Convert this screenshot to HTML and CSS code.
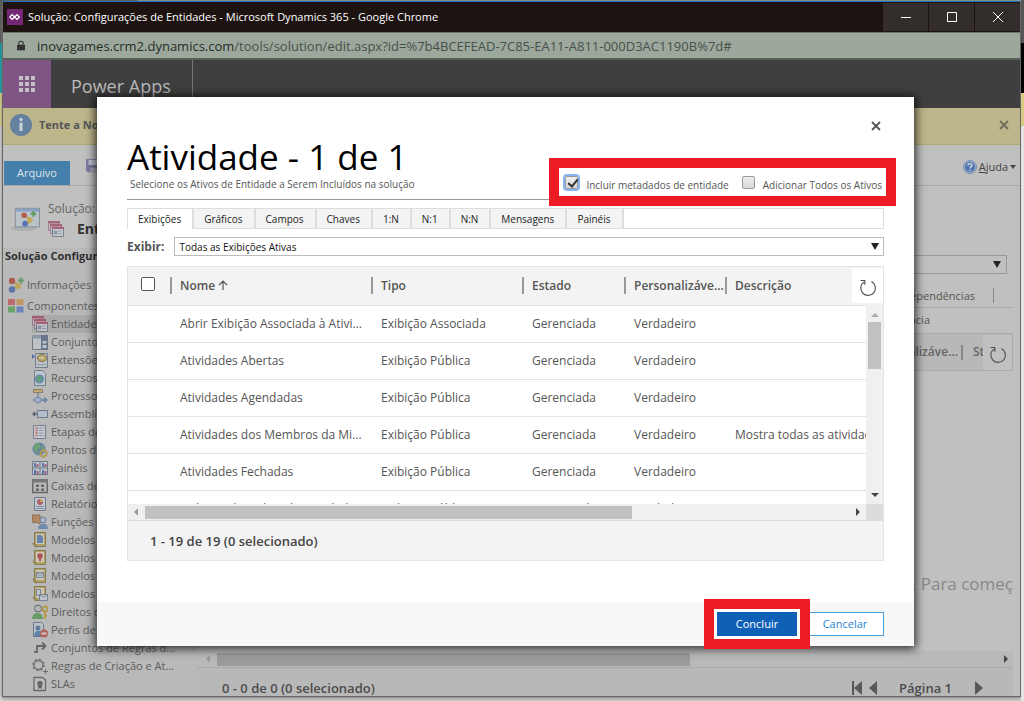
FILE: index.html
```html
<!DOCTYPE html>
<html lang="pt-BR">
<head>
<meta charset="utf-8">
<title>Solução: Configurações de Entidades</title>
<link rel="stylesheet" href="styles.css">
</head>
<body>
<div class="strip strip-left"></div>
<div class="window">
  <header class="titlebar">
    <svg class="app-icon" viewBox="0 0 16 16"><rect width="16" height="16" fill="#742774"/><path d="M5.2 5.6 7.6 8 5.2 10.4 2.8 8zM10 5.6 12.400 8 10 10.400 7.600 8z" fill="none" stroke="#fff" stroke-width="1.300"/></svg>
    <span class="window-title">Solução: Configurações de Entidades - Microsoft Dynamics 365 - Google Chrome</span>
    <button class="win-btn" aria-label="Minimizar"><svg viewBox="0 0 12 12"><path d="M1 6.500h10"/></svg></button>
    <button class="win-btn" aria-label="Maximizar"><svg viewBox="0 0 12 12"><path d="M1.500 1.500h9v9h-9z"/></svg></button>
    <button class="win-btn" aria-label="Fechar janela"><svg viewBox="0 0 12 12"><path d="M1 1l10 10M11 1 1 11"/></svg></button>
  </header>
  <div class="urlbar">
    <svg class="lock" viewBox="0 0 10 12"><path d="M0 5h10v7H0z" fill="#333"/><path d="M2.300 5V3a2.700 2.300 0 0 1 5.400 0v2" fill="none" stroke="#333" stroke-width="1.400"/></svg>
    <span class="url"><b>inovagames.crm2.dynamics.com</b>/tools/solution/edit.aspx?id=%7b4BCEFEAD-7C85-EA11-A811-000D3AC1190B%7d#</span>
  </div>
  <div class="appbar">
    <button class="waffle" aria-label="Aplicativos"><svg viewBox="0 0 16 16" fill="#c4bfc5"><path d="M0 0h4v4H0zM6 0h4v4H6zM12 0h4v4h-4zM0 6h4v4H0zM6 6h4v4H6zM12 6h4v4h-4zM0 12h4v4H0zM6 12h4v4H6zM12 12h4v4h-4z"/></svg></button>
    <span class="brand">Power Apps</span>
  </div>
  <div class="notice">
    <svg class="info" viewBox="0 0 22 22"><circle cx="11" cy="11" r="11" fill="#64819f"/><circle cx="11" cy="5.500" r="1.700" fill="#ccd3d8"/><path d="M9.500 8.500h3v8.500h-3z" fill="#ccd3d8"/></svg>
    <b>Tente a Nova</b>
    <button class="plain notice-close" aria-label="Fechar aviso"><svg viewBox="0 0 10 10"><path d="M1 1l8 8M9 1 1 9" stroke="#6d6b5b" stroke-width="1.800"/></svg></button>
  </div>
  <div class="ribbon">
    <button class="file-tab">Arquivo</button>
    <svg class="disk" viewBox="0 0 16 16"><path d="M0 0h16v15H2L0 13z" fill="#6a6a9c"/><path d="M3 1h10v6H3z" fill="#c4c9db"/><path d="M5 10h8v5H5z" fill="#a3a5ba"/></svg>
    <a class="help" href="#"><svg viewBox="0 0 14 14"><circle cx="7" cy="7" r="6.500" fill="#91a8cb" stroke="#6c87ad"/><circle cx="7" cy="7" r="5" fill="#3f68ad"/><path d="M5 5.500C5 3 9 3 9 5.500 9 7 7 6.800 7 8.500M7 9.700V11" fill="none" stroke="#dde4ef" stroke-width="1.300"/></svg><span><u>A</u>juda</span><i class="tri-down tiny"></i></a>
  </div>
  <div class="solution">
    <svg class="solution-icon" viewBox="0 0 32 28"><ellipse cx="14" cy="24" rx="14" ry="3" fill="#a9adb2"/><path d="M4.500 2.500h26v20h-26z" fill="#bcc3cb" stroke="#75808e"/><path d="M5 3h25v3H5z" fill="#7f9fc6"/><path d="M13 10l9 5-7 6" fill="none" stroke="#b59a4a" stroke-width="2"/><circle cx="14" cy="10" r="3" fill="#b24a3a"/><circle cx="15" cy="19" r="3" fill="#4566b5"/><circle cx="20" cy="15" r="3" fill="#c5a448"/><path d="M21 8.500h6M24 5.500v6" stroke="#4c9a52" stroke-width="2.200"/></svg>
    <div class="solution-text"><span>Solução: Configurações</span><strong><svg class="icon" viewBox="0 0 16 16"><use href="#i-ent"/></svg>Entidades</strong></div>
  </div>
  <div class="body">
    <nav class="sidebar">
      <h2>Solução Configurações</h2>
      <ul class="roots">
        <li><svg class="icon" viewBox="0 0 16 16"><path d="M4 4l7 4-6 4" fill="none" stroke="#a99350" stroke-width="2"/><circle cx="4" cy="4" r="3.200" fill="#a94738"/><circle cx="4" cy="12.500" r="3.200" fill="#4364a8"/><circle cx="10" cy="9" r="3" fill="#c2a249"/><path d="M10 3.500h6M13 .5v6" stroke="#4d9754" stroke-width="2"/></svg>Informações</li>
        <li><svg class="icon" viewBox="0 0 16 16"><path d="M0 1h7v6H0z" fill="#bd5a58"/><path d="M8.500 1h7v6h-7z" fill="#c0924d"/><path d="M0 8.500h7v6H0z" fill="#57a052"/><path d="M8.500 8.500h7v6h-7z" fill="#5875b8"/></svg>Componentes</li>
      </ul>
      <ul class="leaves">
        <li class="selected"><svg class="icon" viewBox="0 0 16 16"><g id="i-ent"><path d="M.5.5h11v9H.5z" fill="#c3bfc4" stroke="#95707f"/><path d="M0 0h12v2.500H0z" fill="#9f4c66"/><path d="M2.500 3.500h11v9h-11z" fill="#c3bfc4" stroke="#95707f"/><path d="M2 3h12v2.500H2z" fill="#9f4c66"/><path d="M4.500 6.500h11v9h-11z" fill="#c9ced5" stroke="#67727f"/><path d="M4 6h12v2H4z" fill="#9f4c66"/><path d="M6 10h3v3H6zM10 10h4M10 12.500h4" fill="#8d99aa" stroke="#77869a" stroke-width=".8"/></g></svg>Entidades</li>
        <li><svg class="icon" viewBox="0 0 16 16"><path d="M.5 1.500h15v14H.5z" fill="#c0c5ca" stroke="#596878"/><path d="M0 1h16v3.500H0z" fill="#8191a3"/><path d="M9 1h7v15H9z" fill="#53667c"/><path d="M10.500 7h4v2.500h-4zM10.500 11h4v3h-4z" fill="#bac5d0"/></svg>Conjuntos</li>
        <li><svg class="icon" viewBox="0 0 16 16"><path d="M3.500 1.500h12v14h-12z" fill="#bfc4cb" stroke="#617080"/><path d="M0 2l3 2.500L0 7z" fill="#3c5eaa"/><ellipse cx="10" cy="6" rx="4.500" ry="3.500" fill="#b4984f" stroke="#81703f"/><path d="M7 6h6M10 4v4" stroke="#e0d6b3"/><path d="M5 12.500h9" stroke="#8796a8"/></svg>Extensões</li>
        <li><svg class="icon" viewBox="0 0 16 16"><path d="M2.500.5h8l3 3v12h-11z" fill="#bfc8d1" stroke="#607080"/><circle cx="7.500" cy="9" r="4.500" fill="#4f7ea5"/><path d="M5 6l5 1-1 3-2 3-2-3z" fill="#4d9b65"/></svg>Recursos</li>
        <li><svg class="icon" viewBox="0 0 16 16"><path d="M1.500 1.500h9v3h-9z" fill="#c6a65c" stroke="#817353"/><path d="M6 5v5M8 12h7M12 9.500l3 2.500-3 2.500" fill="none" stroke="#516f9b" stroke-width="1.300"/><path d="M6 9l5 3-5 3-5-3z" fill="#9eb2ce" stroke="#516f9b"/></svg>Processos</li>
        <li><svg class="icon" viewBox="0 0 16 16"><path d="M5.500 4.500h10v7h-10z" fill="#b4bfcd" stroke="#596b82"/><path d="M5 8H1M3 6 1 8l2 2" fill="none" stroke="#444f5d" stroke-width="1.300"/></svg>Assemblies</li>
        <li><svg class="icon" viewBox="0 0 16 16"><path d="M1.500 1.500h12v13h-12z" fill="#cacdd1" stroke="#627181"/><path d="M3.500 4h2M3.500 6.500h2M3.500 9h2M3.500 11.500h2" stroke="#b34847" stroke-width="1.500"/><path d="M6.500 4h5M6.500 6.500h5M6.500 9h5M6.500 11.500h5" stroke="#8094a8"/></svg>Etapas de</li>
        <li><svg class="icon" viewBox="0 0 16 16"><circle cx="7" cy="7" r="6.500" fill="#50799f"/><path d="M2 3l5-2 2 4-4 3 1 4-4-3zM10 3l3 4-3 1z" fill="#5d9c65"/><circle cx="11.500" cy="11.500" r="3" fill="none" stroke="#ad9345" stroke-width="2"/><path d="M11.500 7v2M11.500 14v2M7 11.500h2M14 11.500h2" stroke="#ad9345" stroke-width="1.500"/></svg>Pontos de</li>
        <li><svg class="icon" viewBox="0 0 16 16"><path d="M.5 1.500h15v13H.5z" fill="#c2c7ce" stroke="#5b6a7d"/><path d="M8 1v14M0 8h16" stroke="#5b6a7d"/><path d="M3 3v4M3 10v4M11 3v4M11 10v4" stroke="#4565a9" stroke-width="2"/><path d="M5.500 4v3M5.500 11v3M13.500 4v3M13.500 11v3" stroke="#a84b65" stroke-width="2"/></svg>Painéis</li>
        <li><svg class="icon" viewBox="0 0 16 16"><path d="M.8 2h14.400v12.500H.8z" fill="none" stroke="#555" stroke-width="1.500"/><path d="M0 1h16v3.500H0z" fill="#666"/><path d="M4 6.500h3v2.500H4zM9 6.500h3v2.500H9zM4 10.500h3V13H4zM9 10.500h3V13H9z" fill="#555"/></svg>Caixas de</li>
        <li><svg class="icon" viewBox="0 0 16 16"><path d="M2.500 1.500h11v13h-11z" fill="#c5cad2" stroke="#5d6a83"/><circle cx="8" cy="6" r="3" fill="#a84c56"/><path d="M8 6V3a3 3 0 0 1 3 3z" fill="#cba650"/><path d="M4 10.500h8M4 12.500h8" stroke="#71809d"/></svg>Relatórios</li>
        <li><svg class="icon" viewBox="0 0 16 16"><path d="M0 1h8v3l2 3-3 3-2-2-4 1z" fill="#b27c51" stroke="#86593c"/><circle cx="11" cy="6" r="3" fill="#a8b7c9" stroke="#536d91"/><path d="M6 15c0-7 10-7 10 0z" fill="#5c7fac"/></svg>Funções de</li>
        <li><svg class="icon" viewBox="0 0 16 16"><g id="i-tpl"><path d="M2.500.5h11v14h-11z" fill="#b39d55" stroke="#776b3d"/><path d="M1 11l4 4" stroke="#8c7b43" stroke-width="2"/><path d="M4 2h8v10H4z" fill="#cfcab5"/></g><path d="M5 3h4l2 2v6H5z" fill="#5576aa"/></svg>Modelos de</li>
        <li><svg class="icon" viewBox="0 0 16 16"><use href="#i-tpl"/><circle cx="8" cy="6" r="2.700" fill="#ac3c3c"/><path d="M7 7h2v4H7z" fill="#ac3c3c"/></svg>Modelos de</li>
        <li><svg class="icon" viewBox="0 0 16 16"><use href="#i-tpl"/><path d="M4.500 4.500h7v5h-7z" fill="#b9c1cb" stroke="#707e90"/><path d="M4.500 4.500 8 7.500l3.500-3" fill="none" stroke="#707e90"/></svg>Modelos de</li>
        <li><svg class="icon" viewBox="0 0 16 16"><use href="#i-tpl"/><path d="M4.500 3.500h4v6h-4zM7.500 8.500h8v6h-8z" fill="#c5cad1" stroke="#65758a"/><path d="M7.500 8.500l4 3 4-3" fill="none" stroke="#65758a"/></svg>Modelos de</li>
        <li><svg class="icon" viewBox="0 0 16 16"><path d="M0 15c0-8 11-8 11 0z" fill="#519653"/><circle cx="6" cy="4.500" r="3.500" fill="#b1b5b7" stroke="#4c5258"/><circle cx="13" cy="5" r="2.500" fill="none" stroke="#b39337" stroke-width="2"/><path d="M13 7v8M13 12h2" stroke="#b39337" stroke-width="2"/></svg>Direitos de</li>
        <li><svg class="icon" viewBox="0 0 16 16"><path d="M1.500.5h8l2 2v12h-10z" fill="#bdc4cb" stroke="#5c6b7b"/><circle cx="6" cy="6" r="2.500" fill="#4b6c94"/><path d="M2 14c0-7 8-7 8 0z" fill="#4b78a8"/><circle cx="12" cy="11.500" r="4" fill="#ae4f42"/><path d="M9.500 11.500h5" stroke="#ddd" stroke-width="1.800"/></svg>Perfis de Seg</li>
        <li><svg class="icon" viewBox="0 0 16 16"><path d="M2 12h3V6h8M10 2.500 13.500 6 10 9.500" fill="none" stroke="#555" stroke-width="1.800"/></svg>Conjuntos de Regras d...</li>
        <li><svg class="icon" viewBox="0 0 16 16"><circle cx="6.500" cy="7" r="4.500" fill="none" stroke="#5c5c5c" stroke-width="1.300"/><circle cx="6.500" cy="7" r="5.500" fill="none" stroke="#5c5c5c" stroke-width="1.500" stroke-dasharray="2 2.300"/><path d="M11 13.500h5M13.500 11v5" stroke="#5c5c5c"/></svg>Regras de Criação e At...</li>
        <li><svg class="icon" viewBox="0 0 16 16"><path d="M2 1.500h8.500L13.500 4v10.500H2z" fill="#c0c0c0" stroke="#555" stroke-width="1.300"/><circle cx="8" cy="7.500" r="2.800" fill="#555"/><path d="M6 9h4v4l-2-1-2 1z" fill="#555"/></svg>SLAs</li>
        <li><svg class="icon" viewBox="0 0 16 16"><path d="M0 3h14v10H0z" fill="#3e74ac"/></svg></li>
      </ul>
    </nav>
    <main class="main">
      <div class="main-select"><i class="tri-down"></i></div>
      <div class="main-actions"><span>Dependências</span><i></i></div>
      <div class="main-sub">Dependência</div>
      <div class="main-head"><b>Personalizáve...</b><i></i><b>St</b><button class="plain refresh" aria-label="Atualizar lista"><svg viewBox="0 0 18 18"><use href="#i-ref"/></svg></button></div>
      <div class="main-empty">. Para começ</div>
      <div class="hscroll main-hscroll"><i class="tri-left"></i><i class="thumb"></i><i class="tri-right"></i></div>
      <div class="main-foot"><b>0 - 0 de 0 (0 selecionado)</b>
        <svg class="pager" viewBox="0 0 28 14" fill="#595959"><path d="M1 0h2v14H1zM11 0v14L3 7zM26 0v14l-8-7z"/></svg><b>Página 1</b><svg class="next" viewBox="0 0 10 14" fill="#595959"><path d="M1 0v14l8-7z"/></svg></div>
    </main>
  </div>
</div>
<div class="strip strip-right"></div>

<section class="dialog" role="dialog" aria-labelledby="dlg-title">
  <button class="plain dialog-close" aria-label="Fechar"><svg viewBox="0 0 10 10"><path d="M1 1l8 8M9 1 1 9" stroke="#555" stroke-width="1.800"/></svg></button>
  <div class="dialog-body">
    <div class="dialog-head">
      <div><h1 id="dlg-title">Atividade - 1 de 1</h1><p>Selecione os Ativos de Entidade a Serem Incluídos na solução</p></div>
      <div class="checks">
        <label><input type="checkbox" class="focused" checked>Incluir metadados de entidade</label>
        <label><input type="checkbox">Adicionar Todos os Ativos</label>
      </div>
    </div>
    <div class="tabs" role="tablist">
      <button role="tab" aria-selected="true">Exibições</button><button role="tab">Gráficos</button><button role="tab">Campos</button><button role="tab">Chaves</button><button role="tab">1:N</button><button role="tab">N:1</button><button role="tab">N:N</button><button role="tab">Mensagens</button><button role="tab">Painéis</button>
    </div>
    <div class="view-row">
      <label for="view">Exibir:</label>
      <div class="select-wrap"><select id="view"><option>Todas as Exibições Ativas</option></select><i class="tri-down"></i></div>
    </div>
    <div class="grid">
      <div class="grid-view">
        <table>
          <colgroup><col class="c-check"><col class="c-name"><col class="c-type"><col class="c-state"><col class="c-custom"><col></colgroup>
          <thead><tr><th><input type="checkbox" aria-label="Selecionar tudo"></th><th>Nome <svg class="sort" viewBox="0 0 10 10"><path d="M5 10V1M1 5l4-4 4 4" fill="none" stroke="#555" stroke-width="1.200"/></svg></th><th>Tipo</th><th>Estado</th><th>Personalizáve...</th><th>Descrição</th></tr></thead>
          <tbody>
            <tr><td></td><td>Abrir Exibição Associada à Ativi...</td><td>Exibição Associada</td><td>Gerenciada</td><td>Verdadeiro</td><td></td></tr>
            <tr><td></td><td>Atividades Abertas</td><td>Exibição Pública</td><td>Gerenciada</td><td>Verdadeiro</td><td></td></tr>
            <tr><td></td><td>Atividades Agendadas</td><td>Exibição Pública</td><td>Gerenciada</td><td>Verdadeiro</td><td></td></tr>
            <tr><td></td><td>Atividades dos Membros da Mi...</td><td>Exibição Pública</td><td>Gerenciada</td><td>Verdadeiro</td><td>Mostra todas as atividades</td></tr>
            <tr><td></td><td>Atividades Fechadas</td><td>Exibição Pública</td><td>Gerenciada</td><td>Verdadeiro</td><td></td></tr>
            <tr><td></td><td>Exibição de Linhas de Atividade</td><td>Exibição Pública</td><td>Gerenciada</td><td>Verdadeiro</td><td></td></tr>
          </tbody>
        </table>
        <div class="vscroll"><i class="tri-up"></i><i class="thumb"></i><i class="tri-down small"></i></div>
        <button class="plain refresh" aria-label="Atualizar"><svg viewBox="0 0 18 18"><g id="i-ref"><path d="M5.200 2.900A7.300 7.300 0 1 0 12.500 2.600" fill="none" stroke="#555" stroke-width="1.200"/><path d="M1.500 1.500h4.300v4.300" fill="none" stroke="#555" stroke-width="1.200"/></g></svg></button>
      </div>
      <div class="hscroll"><i class="tri-left"></i><i class="thumb"></i><i class="tri-right"></i><i class="corner"></i></div>
      <div class="grid-foot">1 - 19 de 19 (0 selecionado)</div>
    </div>
  </div>
  <footer class="dialog-foot"><button class="primary">Concluir</button><button class="secondary">Cancelar</button></footer>
</section>
</body>
</html>
```
FILE: styles.css
```css
* { box-sizing: border-box; }
body {
  margin: 0;
  position: relative;
  height: 100vh;
  overflow: hidden;
  display: flex;
  font: 11px/16px "Open Sans", "Noto Sans", sans-serif;
  color: #555;
  background: linear-gradient(90deg, #555 137px, #86958b 137px) top / 100% 2px no-repeat, #d2d2d2;
}
button, input, select { font: inherit; margin: 0; }
button { border: 0; padding: 0; border-radius: 0; }
i { flex: none; }
svg { display: block; flex: none; }
ul { list-style: none; margin: 0; padding: 0; }
.plain { background: none; }

.strip-left {
  width: 2px;
  background: linear-gradient(#555 43px, #00a1ae 43px 93px, #e5d98b 93px 126px, #d9d9d9 126px);
}
.strip-right {
  width: 3px;
  background: linear-gradient(#555 43px, #000 43px 93px, #d8cc85 93px 126px, #e4e4e4 126px);
}

.window {
  flex: 1;
  min-width: 0;
  margin: 1px 0 4px;
  display: flex;
  flex-direction: column;
  border: 1px solid #666;
  border-top-color: #1f75c4;
  background: #c0c0c0;
  box-shadow: 0 1px 4px #777;
  overflow: hidden;
}
.titlebar { display: flex; align-items: center; height: 30px; flex: none; background: #1d1411; color: #fff; font-size: 11px; }
.app-icon { width: 16px; height: 16px; margin: 0 5px 0 4px; }
.window-title { flex: 1; white-space: nowrap; }
.win-btn { width: 45px; height: 28px; margin-left: 1px; background: #332e2b; display: grid; place-items: center; }
.win-btn svg { width: 12px; height: 12px; fill: none; stroke: #fff; }
.urlbar { display: flex; align-items: center; gap: 12px; height: 28px; flex: none; padding-left: 14px; background: #9da89d; border-top: 1px solid #6d786d; border-bottom: 2px solid #566059; font-size: 13px; color: #47504a; }
.urlbar b { font-weight: 400; color: #272c29; }
.lock { width: 8px; height: 11px; }
.url { white-space: nowrap; }
.appbar { display: flex; height: 48px; flex: none; background: #3f3f3f; }
.waffle { width: 48px; background: #7f5583; display: grid; place-items: center; }
.waffle svg { width: 16px; height: 16px; }
.brand { display: flex; align-items: center; padding: 4px 21px 0 20px; border-right: 1px solid #777; font-size: 18px; color: #bbb; }
.notice { display: flex; align-items: center; gap: 7px; height: 37px; flex: none; padding: 0 11px 2px 7px; background: #bdb68b; border-bottom: 1px solid #b0a872; }
.info { width: 22px; height: 22px; }
.notice-close { margin-left: auto; }
.notice-close svg, .dialog-close svg { width: 10px; height: 10px; }
.ribbon { display: flex; align-items: flex-end; height: 41px; flex: none; padding: 0 4px 0 1px; border-bottom: 1px solid #a8a8a8; }
.file-tab { width: 66px; height: 24px; background: #4480ab; color: #dfe5ea; }
.disk { width: 14px; height: 14px; margin: 0 0 12px 16px; opacity: .8; }
.help { display: flex; align-items: center; gap: 2px; margin: 0 0 10px auto; color: #444; text-decoration: none; }
.help svg { width: 14px; height: 14px; opacity: .85; }
.solution { display: flex; align-items: center; gap: 7px; height: 62px; flex: none; padding: 4px 0 0 8px; }
.solution-icon { width: 30px; height: 26px; opacity: .85; }
.solution-text { display: flex; flex-direction: column; gap: 4px; font-size: 12px; white-space: nowrap; color: #666; }
.solution-text strong { display: flex; align-items: center; gap: 13px; font-size: 14px; color: #333; }
.icon { width: 16px; height: 16px; opacity: .8; }

.body { flex: 1; min-height: 0; display: flex; overflow: hidden; }
.sidebar { width: 194px; flex: none; background: #b9b9b9; color: #5c5c5c; white-space: nowrap; }
.sidebar h2 { margin: 0; padding: 0 2px; font-size: 11px; line-height: 16px; color: #2f2f2f; }
.sidebar li { display: flex; align-items: center; gap: 3px; height: 18px; }
.roots { padding: 12px 0 0 5px; }
.roots li { margin-bottom: 3px; }
.roots li + li { margin-bottom: 0; }
.leaves li { padding-left: 29px; }
.leaves .selected { background: linear-gradient(90deg, transparent 29px, #a9a9a9 29px); }

.main { flex: 1; min-width: 0; display: flex; flex-direction: column; padding-right: 7px; }
.main-select { display: flex; align-items: center; justify-content: flex-end; height: 19px; flex: none; margin: 7px 6px 0 0; padding-right: 5px; border: 1px solid #999; }
.main-actions { display: flex; align-items: center; justify-content: flex-end; gap: 18px; height: 34px; flex: none; padding: 10px 19px 0 0; border-bottom: 1px solid #aaa; }
.main-actions i, .main-head i { width: 1px; height: 15px; background: #888; }
.main-sub { height: 25px; flex: none; padding: 4px 83px 0 0; text-align: right; }
.main-head { display: flex; align-items: center; justify-content: flex-end; gap: 3px; height: 38px; flex: none; position: relative; background: #b8b8b8; border: 1px solid #aaa; border-width: 1px 1px 1px 0; font-size: 12px; color: #666; }
.main-head b { font-weight: 600; }
.main-head i { width: 2px; }
.main-head b + i + b { width: 46px; padding-left: 7px; }
.main-head .refresh { background: #c0c0c0; width: 29px; }
.main-empty { flex: 1; padding-top: 200px; text-align: right; font-size: 17px; line-height: 26px; color: #888; white-space: nowrap; }
.main-foot { display: flex; align-items: center; height: 28px; flex: none; padding: 12px 29px 0 25px; background: #b8b8b8; font-size: 13px; color: #4b4b4b; }
.main-foot b { font-weight: 600; }
.pager { width: 28px; height: 14px; margin: 0 20px 0 auto; }
.next { width: 10px; height: 14px; margin-left: 22px; }

.tri-down { border: 4px solid transparent; border-top: 7px solid #222; border-bottom: 0; }
.tri-down.small { border-width: 4px 4px 0; }
.tri-down.tiny { border-width: 4px 3px 0; border-top-color: #444; }
.tri-up { border: 4px solid transparent; border-bottom: 4px solid #aaa; border-top: 0; }
.tri-left { border: 4px solid transparent; border-right: 4px solid #999; border-left: 0; }
.tri-right { border: 4px solid transparent; border-left: 4px solid #444; border-right: 0; }

.dialog {
  position: absolute;
  inset: 97px 110px 55px 97px;
  display: flex;
  flex-direction: column;
  background: #fff;
  box-shadow: 0 1px 9px 2px rgba(0, 0, 0, .75);
}
.dialog-close { position: absolute; top: 24px; right: 33px; }
.dialog-body { flex: 1; padding: 38px 30px 0 30px; }
.dialog-head { display: flex; justify-content: space-between; align-items: flex-end; height: 65px; padding-bottom: 3px; border-bottom: 1px solid #999; }
.dialog h1 { margin: 0; font-size: 35px; line-height: 40px; font-weight: 400; color: #000; white-space: nowrap; }
.dialog p { margin: 0 0 5px 3px; font-size: 10px; line-height: 14px; white-space: nowrap; }
.checks { display: flex; align-items: center; gap: 13px; height: 28px; margin-right: -2px; padding: 0 4px 0 6px; background: #fff; outline: 10px solid #ed1c24; white-space: nowrap; color: #555; }
.checks label { display: flex; align-items: center; gap: 8px; font-size: 10px; padding-top: 6px; }
.checks input { appearance: none; width: 13px; height: 13px; margin: 0 0 6px; border: 1px solid #999; border-radius: 2px; background: linear-gradient(#eee, #d8d8d8); }
.checks .focused { outline: 2px solid #8ab4f0; position: relative; }
.checks .focused::after { content: ""; position: absolute; left: 4px; top: 0; width: 4px; height: 8px; border: solid #333; border-width: 0 2px 2px 0; rotate: 40deg; }

.tabs { display: flex; height: 21px; margin-top: 8px; border: 1px solid #ddd; }
.tabs button { padding: 0 11px 0 10px; background: #f3f3f3; border-right: 2px solid #ddd; color: #222; font-size: 10px; }
.tabs [aria-selected] { background: #fff; margin-bottom: -1px; }
.view-row { display: flex; align-items: center; gap: 10px; margin-top: 8px; }
.view-row label { font-size: 12px; font-weight: 700; }
.select-wrap { flex: 1; position: relative; }
.select-wrap select { appearance: none; display: block; width: 100%; height: 19px; padding: 0 4px; border: 1px solid #bbb; border-radius: 0; background: #fff; color: #111; font-size: 10px; }
.select-wrap i { position: absolute; right: 5px; top: 6px; }

.grid { margin-top: 10px; border: 1px solid #e4e4e4; background: #f3f3f3; }
.grid-view { position: relative; display: flex; height: 237px; overflow: hidden; background: linear-gradient(#f3f3f3 38px, #fff 38px); }
.grid table { width: 100%; flex: 1; min-width: 0; table-layout: fixed; border-collapse: collapse; align-self: flex-start; font-size: 12px; line-height: 16px; }
.c-check { width: 42px; }
.c-name { width: 201px; }
.c-type { width: 151px; }
.c-state { width: 102px; }
.c-custom { width: 101px; }
.grid th, .grid td { padding: 0 0 0 10px; text-align: left; white-space: nowrap; overflow: hidden; border-bottom: 1px solid #e4e4e4; }
.grid th { height: 38px; font-weight: 600; background: linear-gradient(#999, #999) 0 10px / 2px 17px no-repeat #f3f3f3; }
.grid th:first-child { background: #f3f3f3; padding-left: 13px; }
.grid th input { display: block; appearance: none; width: 14px; height: 14px; margin-bottom: 4px; border: 1px solid #555; border-radius: 2px; background: #fff; }
.grid td { height: 37px; background: #fff; }
.sort { display: inline-block; width: 10px; height: 10px; }
.refresh { position: absolute; top: 1px; right: 0; width: 31px; height: 35px; background: #fff; display: grid; place-items: center; }
.refresh svg { width: 18px; height: 18px; margin-top: 4px; }
.vscroll { display: flex; flex: none; flex-direction: column; align-items: center; width: 17px; margin-top: 38px; padding: 8px 0 7px; background: #f0f0f0; }
.vscroll .thumb { width: 13px; height: 47px; margin: 5px 0 auto; background: #c1c1c1; }
.vscroll .tri-down { border-top-color: #444; }
.hscroll { display: flex; align-items: center; height: 17px; flex: none; padding-left: 6px; background: #f0f0f0; border-bottom: 1px solid #ddd; }
.hscroll .thumb { width: 65%; height: 13px; margin: 0 auto 0 7px; background: #c1c1c1; }
.hscroll .corner { width: 17px; align-self: stretch; margin-left: 6px; background: #dcdcdc; }
.main-hscroll { padding: 0 5px 0 9px; background: #b9b9b9; border-color: #aaa; }
.main-hscroll .thumb { width: 59%; background: #9b9b9b; }
.grid-foot { height: 39px; padding: 12px 22px; font-size: 13px; font-weight: 600; color: #444; }

.dialog-foot { display: flex; justify-content: flex-end; align-items: center; gap: 9px; height: 44px; padding-right: 30px; background: #f8f8f8; }
.dialog-foot button { height: 24px; font-size: 11px; }
.primary { width: 80px; position: relative; background: #1160b7; color: #fff; box-shadow: 0 0 0 3px #fff, 0 0 0 13px #ed1c24; }
.secondary { width: 78px; background: #fff; color: #2a7fd0; box-shadow: inset 0 0 0 1px #4ba0e1; }
```
